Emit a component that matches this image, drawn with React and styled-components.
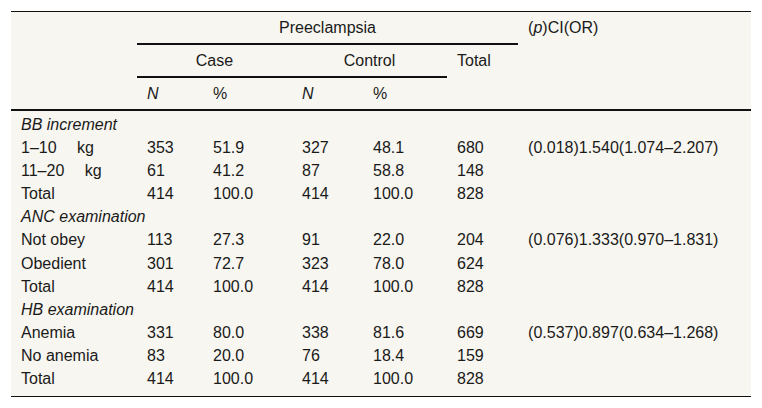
import React from "react";
import styled, { createGlobalStyle } from "styled-components";

const GlobalStyle = createGlobalStyle`
  body {
    margin: 0;
    background: #fff;
    font-family: "Liberation Sans", Arial, sans-serif;
    color: #1a1a1a;
  }
`;

const Page = styled.div`
  padding: 11px;
`;

const Table = styled.table`
  width: 740px;
  table-layout: fixed;
  border-collapse: separate;
  border-spacing: 0;
  background-color: #f8f6f0;
  border-top: 1px solid #111;
  border-bottom: 1px solid #111;
  font-size: 16px;

  tbody tr:first-child td {
    padding-top: 2px;
  }
  tbody tr:last-child td {
    padding-bottom: 6px;
  }
`;

const HeadCell = styled.th`
  font-weight: normal;
  text-align: ${(props) => (props.center ? "center" : "left")};
  vertical-align: top;
  padding: 6px 10px;
  line-height: 19px;
  font-style: ${(props) => (props.italic ? "italic" : "normal")};
  border-bottom: ${(props) => (props.line ? "2px solid #111" : "none")};
`;

const Cell = styled.td`
  padding: 0 10px;
  line-height: 23.1px;
  white-space: pre;
  vertical-align: top;
`;

const GroupCell = styled(Cell)`
  font-style: italic;
`;

const columns = [126, 66, 89, 71, 84, 71, 233];

const groups = [
  {
    title: "BB increment",
    rows: [
      ["1–10 \u2003kg", "353", "51.9", "327", "48.1", "680", "(0.018)1.540(1.074–2.207)"],
      ["11–20 \u2003kg", "61", "41.2", "87", "58.8", "148", ""],
      ["Total", "414", "100.0", "414", "100.0", "828", ""],
    ],
  },
  {
    title: "ANC examination",
    rows: [
      ["Not obey", "113", "27.3", "91", "22.0", "204", "(0.076)1.333(0.970–1.831)"],
      ["Obedient", "301", "72.7", "323", "78.0", "624", ""],
      ["Total", "414", "100.0", "414", "100.0", "828", ""],
    ],
  },
  {
    title: "HB examination",
    rows: [
      ["Anemia", "331", "80.0", "338", "81.6", "669", "(0.537)0.897(0.634–1.268)"],
      ["No anemia", "83", "20.0", "76", "18.4", "159", ""],
      ["Total", "414", "100.0", "414", "100.0", "828", ""],
    ],
  },
];

const App = () => {
  return (
    <Page>
      <GlobalStyle />
      <Table>
        <colgroup>
          {columns.map((w, i) => (
            <col key={i} style={{ width: w }} />
          ))}
        </colgroup>
        <thead>
          <tr>
            <HeadCell rowSpan={3} line />
            <HeadCell colSpan={5} center line>
              Preeclampsia
            </HeadCell>
            <HeadCell rowSpan={3} line>
              (<i>p</i>)CI(OR)
            </HeadCell>
          </tr>
          <tr>
            <HeadCell colSpan={2} center line>
              Case
            </HeadCell>
            <HeadCell colSpan={2} center line>
              Control
            </HeadCell>
            <HeadCell rowSpan={2} line>
              Total
            </HeadCell>
          </tr>
          <tr>
            <HeadCell italic line>N</HeadCell>
            <HeadCell line>%</HeadCell>
            <HeadCell italic line>N</HeadCell>
            <HeadCell line>%</HeadCell>
          </tr>
        </thead>
        <tbody>
          {groups.map((group) => (
            <React.Fragment key={group.title}>
              <tr>
                <GroupCell colSpan={7}>{group.title}</GroupCell>
              </tr>
              {group.rows.map((row, i) => (
                <tr key={i}>
                  {row.map((value, j) => (
                    <Cell key={j}>{value}</Cell>
                  ))}
                </tr>
              ))}
            </React.Fragment>
          ))}
        </tbody>
      </Table>
    </Page>
  );
};

export default App;
